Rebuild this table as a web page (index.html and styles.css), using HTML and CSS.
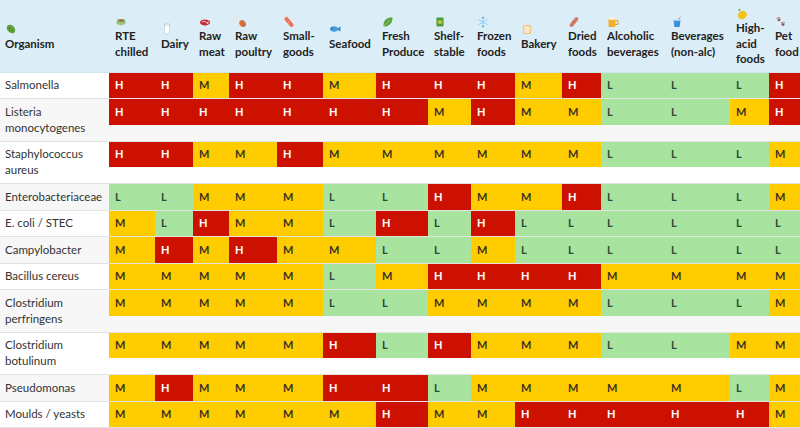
FILE: index.html
```html
<!DOCTYPE html>
<html lang="en">
<head>
<meta charset="utf-8">
<title>Pathogen risk matrix</title>
<link rel="stylesheet" href="styles.css">
</head>
<body>
<div class="wrap">
<table class="matrix">
<colgroup>
<col class="w-org"><col class="w46"><col class="w38"><col class="w36"><col class="w48"><col class="w46"><col class="w53"><col class="w52"><col class="w43"><col class="w44"><col class="w47"><col class="w39"><col class="w64"><col class="w65"><col class="w39"><col class="w41">
</colgroup>
<thead>
<tr>
<th class="org-h"><span class="ic"><svg viewBox="0 0 12 12"><ellipse cx="6" cy="6" rx="4.8" ry="3.6" transform="rotate(45 6 6)" fill="#5f9f38"/><circle cx="4.6" cy="4.8" r="0.9" fill="#3f7a22"/><circle cx="7.2" cy="7.3" r="0.8" fill="#3f7a22"/><circle cx="6.4" cy="4.6" r="0.6" fill="#8cc45e"/></svg></span>Organism</th>
<th><span class="ic"><svg viewBox="0 0 12 12"><circle cx="4" cy="5" r="2" fill="#6fb44a"/><circle cx="8" cy="5" r="1.9" fill="#5aa33f"/><circle cx="6" cy="4.6" r="1.4" fill="#d9463b"/><path d="M1 5.8 H11 A5 3.6 0 0 1 1 5.8Z" fill="#9cc08a"/></svg></span>RTE<br>chilled</th>
<th><span class="ic"><svg viewBox="0 0 12 12"><path d="M3.4 1 H8.6 L8 11 H4 Z" fill="#f2f5f7" stroke="#b7c2ca" stroke-width="0.8"/><path d="M3.7 4 H8.3 L8 10.6 H4 Z" fill="#ffffff"/></svg></span>Dairy</th>
<th><span class="ic"><svg viewBox="0 0 12 12"><ellipse cx="6" cy="6.4" rx="5" ry="3" fill="#c62a3a"/><path d="M3 6 Q5 4.5 7 6.2 T10 5.8" stroke="#f3c9c9" stroke-width="0.9" fill="none"/><circle cx="8.5" cy="7" r="0.8" fill="#f6e0d6"/></svg></span>Raw<br>meat</th>
<th><span class="ic"><svg viewBox="0 0 12 12"><path d="M1.5 1.5 L5 5" stroke="#f1e6d6" stroke-width="1.6" stroke-linecap="round"/><circle cx="1.5" cy="1.3" r="0.9" fill="#f1e6d6"/><ellipse cx="7.6" cy="7.6" rx="3.6" ry="3" transform="rotate(45 7.6 7.6)" fill="#d2703a"/></svg></span>Raw<br>poultry</th>
<th><span class="ic"><svg viewBox="0 0 12 12"><rect x="4" y="0" width="4" height="12" rx="2" transform="rotate(-40 6 6)" fill="#ee7458"/><path d="M3.6 3.6 L5 5 M6 6 L7.4 7.4" stroke="#f9c3b2" stroke-width="0.8" transform="rotate(90 6 6)"/></svg></span>Small-<br>goods</th>
<th><span class="ic"><svg viewBox="0 0 12 12"><ellipse cx="5" cy="6" rx="4" ry="2.8" fill="#4b9ad9"/><path d="M8 6 L11.5 3.2 L11.5 8.8 Z" fill="#3a86c8"/><circle cx="3" cy="5.3" r="0.6" fill="#1b3a5c"/></svg></span>Seafood</th>
<th><span class="ic"><svg viewBox="0 0 12 12"><path d="M1.5 10.5 C1 5 4 1.2 10.5 1.2 C10.8 7 7 10.8 1.5 10.5Z" fill="#5ba33d"/><path d="M2 10 L8 4" stroke="#a9d58a" stroke-width="0.7"/></svg></span>Fresh<br>Produce</th>
<th><span class="ic"><svg viewBox="0 0 12 12"><rect x="2.5" y="1.5" width="7" height="9" rx="0.8" fill="#4f9a3a"/><rect x="2.5" y="4" width="7" height="4" fill="#69b24a"/><circle cx="6" cy="6" r="1.5" fill="#f2c41c"/></svg></span>Shelf-<br>stable</th>
<th><span class="ic"><svg viewBox="0 0 12 12"><g stroke="#8fcdf2" stroke-width="1" stroke-linecap="round"><path d="M6 1 V11"/><path d="M1.7 3.5 L10.3 8.5"/><path d="M1.7 8.5 L10.3 3.5"/><path d="M4.8 1.8 L6 3 L7.2 1.8 M4.8 10.2 L6 9 L7.2 10.2"/></g></svg></span>Frozen<br>foods</th>
<th><span class="ic"><svg viewBox="0 0 12 12"><path d="M2 11 V5 C1 4.5 1 2 3.5 2 H8.5 C11 2 11 4.5 10 5 V11 Z" fill="#f0c48a"/><path d="M3.2 10 V5.4 C2.6 5 2.6 3.3 4 3.3 H8 C9.4 3.3 9.4 5 8.8 5.4 V10 Z" fill="#fbe7c6"/></svg></span>Bakery</th>
<th><span class="ic"><svg viewBox="0 0 12 12"><rect x="4" y="0.2" width="4" height="11.6" rx="2" transform="rotate(40 6 6)" fill="#d0806c"/><circle cx="6" cy="6" r="0.7" fill="#b3604e"/><circle cx="4.2" cy="8" r="0.6" fill="#b3604e"/></svg></span>Dried<br>foods</th>
<th><span class="ic"><svg viewBox="0 0 12 12"><rect x="1.5" y="2.5" width="7" height="8.5" rx="1" fill="#f4ae2a"/><rect x="1.5" y="1.5" width="7" height="2.2" rx="1" fill="#fff3d6"/><path d="M8.5 4.5 H10 Q11 4.5 11 5.5 V7.5 Q11 8.5 10 8.5 H8.5" stroke="#e89a1c" stroke-width="1.1" fill="none"/></svg></span>Alcoholic<br>beverages</th>
<th><span class="ic"><svg viewBox="0 0 12 12"><path d="M7 4 L9.5 0.8" stroke="#e35d8a" stroke-width="0.9"/><path d="M2.5 4 H9.5 L8.6 11 H3.4 Z" fill="#3f8fdc"/><rect x="2.2" y="3.4" width="7.6" height="1.4" rx="0.5" fill="#bfe0f7"/></svg></span>Beverages<br>(non-alc)</th>
<th><span class="ic"><svg viewBox="0 0 12 12"><ellipse cx="6.4" cy="7" rx="4.6" ry="4" transform="rotate(-30 6.4 7)" fill="#f5c21a"/><path d="M3 3.2 C2 2 2.5 0.8 4.2 1 C4.4 2.4 3.8 3.2 3 3.2Z" fill="#4c9a2f"/></svg></span>High-<br>acid<br>foods</th>
<th><span class="ic"><svg viewBox="0 0 12 12"><g fill="#8c5a52"><ellipse cx="4" cy="4" rx="1.5" ry="1.3"/><circle cx="2.2" cy="2.2" r="0.6"/><circle cx="3.6" cy="1.6" r="0.6"/><circle cx="5" cy="2" r="0.6"/><ellipse cx="8" cy="8.6" rx="1.5" ry="1.3"/><circle cx="6.4" cy="6.8" r="0.6"/><circle cx="7.8" cy="6.3" r="0.6"/><circle cx="9.2" cy="6.7" r="0.6"/></g></svg></span>Pet<br>food</th>
</tr>
</thead>
<tbody>
<tr><td class="org">Salmonella</td><td><div class="r h">H</div></td><td><div class="r h">H</div></td><td><div class="r m">M</div></td><td><div class="r h">H</div></td><td><div class="r h">H</div></td><td><div class="r m">M</div></td><td><div class="r h">H</div></td><td><div class="r h">H</div></td><td><div class="r h">H</div></td><td><div class="r m">M</div></td><td><div class="r h">H</div></td><td><div class="r l">L</div></td><td><div class="r l">L</div></td><td><div class="r l">L</div></td><td><div class="r h">H</div></td></tr>
<tr><td class="org">Listeria<br>monocytogenes</td><td><div class="r h">H</div></td><td><div class="r h">H</div></td><td><div class="r h">H</div></td><td><div class="r h">H</div></td><td><div class="r h">H</div></td><td><div class="r h">H</div></td><td><div class="r h">H</div></td><td><div class="r m">M</div></td><td><div class="r h">H</div></td><td><div class="r m">M</div></td><td><div class="r m">M</div></td><td><div class="r l">L</div></td><td><div class="r l">L</div></td><td><div class="r m">M</div></td><td><div class="r h">H</div></td></tr>
<tr><td class="org">Staphylococcus<br>aureus</td><td><div class="r h">H</div></td><td><div class="r h">H</div></td><td><div class="r m">M</div></td><td><div class="r m">M</div></td><td><div class="r h">H</div></td><td><div class="r m">M</div></td><td><div class="r m">M</div></td><td><div class="r m">M</div></td><td><div class="r m">M</div></td><td><div class="r m">M</div></td><td><div class="r m">M</div></td><td><div class="r l">L</div></td><td><div class="r l">L</div></td><td><div class="r l">L</div></td><td><div class="r m">M</div></td></tr>
<tr><td class="org">Enterobacteriaceae</td><td><div class="r l">L</div></td><td><div class="r l">L</div></td><td><div class="r m">M</div></td><td><div class="r m">M</div></td><td><div class="r m">M</div></td><td><div class="r l">L</div></td><td><div class="r l">L</div></td><td><div class="r h">H</div></td><td><div class="r m">M</div></td><td><div class="r m">M</div></td><td><div class="r h">H</div></td><td><div class="r l">L</div></td><td><div class="r l">L</div></td><td><div class="r l">L</div></td><td><div class="r m">M</div></td></tr>
<tr><td class="org">E. coli / STEC</td><td><div class="r m">M</div></td><td><div class="r l">L</div></td><td><div class="r h">H</div></td><td><div class="r m">M</div></td><td><div class="r m">M</div></td><td><div class="r l">L</div></td><td><div class="r h">H</div></td><td><div class="r l">L</div></td><td><div class="r h">H</div></td><td><div class="r l">L</div></td><td><div class="r l">L</div></td><td><div class="r l">L</div></td><td><div class="r l">L</div></td><td><div class="r l">L</div></td><td><div class="r l">L</div></td></tr>
<tr><td class="org">Campylobacter</td><td><div class="r m">M</div></td><td><div class="r h">H</div></td><td><div class="r m">M</div></td><td><div class="r h">H</div></td><td><div class="r m">M</div></td><td><div class="r m">M</div></td><td><div class="r l">L</div></td><td><div class="r l">L</div></td><td><div class="r m">M</div></td><td><div class="r l">L</div></td><td><div class="r l">L</div></td><td><div class="r l">L</div></td><td><div class="r l">L</div></td><td><div class="r l">L</div></td><td><div class="r l">L</div></td></tr>
<tr><td class="org">Bacillus cereus</td><td><div class="r m">M</div></td><td><div class="r m">M</div></td><td><div class="r m">M</div></td><td><div class="r m">M</div></td><td><div class="r m">M</div></td><td><div class="r l">L</div></td><td><div class="r m">M</div></td><td><div class="r h">H</div></td><td><div class="r h">H</div></td><td><div class="r h">H</div></td><td><div class="r h">H</div></td><td><div class="r m">M</div></td><td><div class="r m">M</div></td><td><div class="r m">M</div></td><td><div class="r m">M</div></td></tr>
<tr><td class="org">Clostridium<br>perfringens</td><td><div class="r m">M</div></td><td><div class="r m">M</div></td><td><div class="r m">M</div></td><td><div class="r m">M</div></td><td><div class="r m">M</div></td><td><div class="r l">L</div></td><td><div class="r l">L</div></td><td><div class="r m">M</div></td><td><div class="r m">M</div></td><td><div class="r m">M</div></td><td><div class="r m">M</div></td><td><div class="r l">L</div></td><td><div class="r l">L</div></td><td><div class="r l">L</div></td><td><div class="r m">M</div></td></tr>
<tr><td class="org">Clostridium<br>botulinum</td><td><div class="r m">M</div></td><td><div class="r m">M</div></td><td><div class="r m">M</div></td><td><div class="r m">M</div></td><td><div class="r m">M</div></td><td><div class="r h">H</div></td><td><div class="r l">L</div></td><td><div class="r h">H</div></td><td><div class="r m">M</div></td><td><div class="r m">M</div></td><td><div class="r m">M</div></td><td><div class="r l">L</div></td><td><div class="r l">L</div></td><td><div class="r m">M</div></td><td><div class="r m">M</div></td></tr>
<tr><td class="org">Pseudomonas</td><td><div class="r m">M</div></td><td><div class="r h">H</div></td><td><div class="r m">M</div></td><td><div class="r m">M</div></td><td><div class="r m">M</div></td><td><div class="r h">H</div></td><td><div class="r h">H</div></td><td><div class="r l">L</div></td><td><div class="r m">M</div></td><td><div class="r m">M</div></td><td><div class="r m">M</div></td><td><div class="r m">M</div></td><td><div class="r m">M</div></td><td><div class="r l">L</div></td><td><div class="r m">M</div></td></tr>
<tr><td class="org">Moulds / yeasts</td><td><div class="r m">M</div></td><td><div class="r m">M</div></td><td><div class="r m">M</div></td><td><div class="r m">M</div></td><td><div class="r m">M</div></td><td><div class="r m">M</div></td><td><div class="r h">H</div></td><td><div class="r m">M</div></td><td><div class="r m">M</div></td><td><div class="r h">H</div></td><td><div class="r h">H</div></td><td><div class="r h">H</div></td><td><div class="r h">H</div></td><td><div class="r h">H</div></td><td><div class="r m">M</div></td></tr>
</tbody>
</table>
</div>
</body>
</html>
```
FILE: styles.css
```css
html, body {
  margin: 0;
  padding: 0;
  background: #ffffff;
}
body {
  font-family: Lato, "Liberation Sans", sans-serif;
  font-size: 11.5px;
  line-height: 16px;
  color: #333333;
}
.wrap {
  width: 800px;
  overflow: hidden;
}
.matrix {
  border-collapse: collapse;
  table-layout: fixed;
  width: 810px;
}
.w-org { width: 109px; }
.w36 { width: 36px; }
.w38 { width: 38px; }
.w39 { width: 39px; }
.w41 { width: 41px; }
.w43 { width: 43px; }
.w44 { width: 44px; }
.w46 { width: 46px; }
.w47 { width: 47px; }
.w48 { width: 48px; }
.w52 { width: 52px; }
.w53 { width: 53px; }
.w64 { width: 64px; }
.w65 { width: 65px; }

.matrix thead th {
  background: #dbeef8;
  text-align: left;
  vertical-align: middle;
  font-weight: 700;
  line-height: 15.4px;
  color: #222222;
  padding: 5px 6px;
  white-space: nowrap;
  border-bottom: 1px solid #d2e3ec;
}
.matrix thead th.org-h {
  padding-left: 5px;
}
.ic {
  display: block;
  height: 15.4px;
  line-height: 15.4px;
}
.ic svg {
  display: inline-block;
  vertical-align: middle;
  width: 12px;
  height: 12px;
}
.matrix tbody tr {
  border-bottom: 1px solid #e3e3e3;
  background: #ffffff;
}
.matrix tbody tr:nth-child(even) {
  background: #f7f7f7;
}
.matrix td {
  padding: 0;
  vertical-align: top;
}
.matrix td.org {
  padding: 4.75px 5px;
  white-space: nowrap;
  color: #333333;
}
.r {
  padding: 4.75px 6px;
  font-weight: 700;
  font-size: 11px;
}
.r.h {
  background: #cc1100;
  color: #ffffff;
}
.r.m {
  background: #ffcc00;
  color: #3a3320;
}
.r.l {
  background: #a8e4a0;
  color: #2f4a36;
}
```
